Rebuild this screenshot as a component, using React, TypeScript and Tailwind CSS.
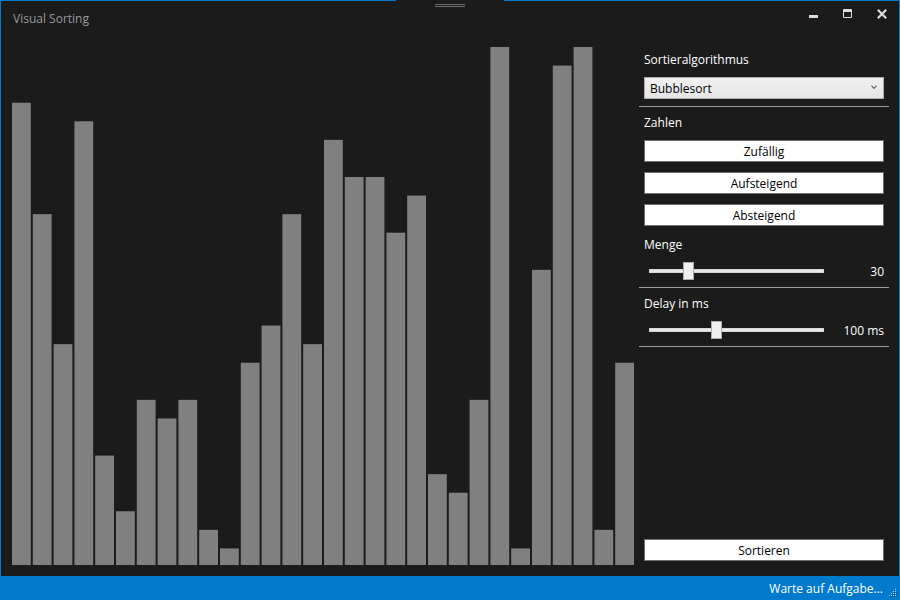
import { useState, type ReactNode } from "react";

const PITCH = 624 / 30;
const UNIT = 520 / 28;
const CHART_WIDTH = 622;
const CHART_HEIGHT = 518;

const numbers = [
  25, 19, 12, 24, 6, 3, 9, 8, 9, 2, 1, 11, 13, 19, 12, 23, 21, 21, 18, 20, 5, 4,
  9, 28, 1, 16, 27, 28, 2, 11,
];

function BarChart() {
  return (
    <svg
      className="min-w-0 flex-1 self-stretch"
      viewBox={`0 0 ${CHART_WIDTH} ${CHART_HEIGHT}`}
      preserveAspectRatio="none"
      role="img"
      aria-label="Zahlen"
    >
      {numbers.map((value, i) => {
        const height = value * UNIT - 2;
        return (
          <rect
            key={i}
            x={i * PITCH}
            y={CHART_HEIGHT - height}
            width={PITCH - 2}
            height={height}
            fill="#808080"
          />
        );
      })}
    </svg>
  );
}

function WindowButton({ label, children }: { label: string; children: ReactNode }) {
  return (
    <button
      type="button"
      aria-label={label}
      className="flex h-[26px] w-[34px] items-center justify-center text-[#dcdcdc]"
    >
      <svg width="10" height="10" viewBox="0 0 10 10" fill="none" stroke="currentColor">
        {children}
      </svg>
    </button>
  );
}

function PushButton({ children }: { children: ReactNode }) {
  return (
    <button
      type="button"
      className="mx-[5px] h-[22px] border border-[#707070] bg-white pt-0.5 text-center leading-[18px] text-black"
    >
      {children}
    </button>
  );
}

function Separator() {
  return <hr className="mt-[7px] mb-[3px] h-px border-0 bg-[#a0a0a0]" />;
}

type SliderProps = {
  id: string;
  label: string;
  min: number;
  max: number;
  initial: number;
  unit?: string;
};

function SliderField({ id, label, min, max, initial, unit = "" }: SliderProps) {
  const [value, setValue] = useState(initial);
  return (
    <>
      <label htmlFor={id} className="mb-1 px-[5px] leading-[26px]">
        {label}
      </label>
      <div className="flex h-[18px] items-center justify-between pr-[5px] pl-2.5">
        <input
          id={id}
          type="range"
          min={min}
          max={max}
          value={value}
          onChange={(e) => setValue(Number(e.target.value))}
          className="h-[18px] w-[175px] appearance-none bg-transparent [&::-webkit-slider-runnable-track]:h-1 [&::-webkit-slider-runnable-track]:border [&::-webkit-slider-runnable-track]:border-[#d6d6d6] [&::-webkit-slider-runnable-track]:bg-[#e7eaea] [&::-webkit-slider-thumb]:-mt-2 [&::-webkit-slider-thumb]:h-[18px] [&::-webkit-slider-thumb]:w-[11px] [&::-webkit-slider-thumb]:appearance-none [&::-webkit-slider-thumb]:border [&::-webkit-slider-thumb]:border-[#acacac] [&::-webkit-slider-thumb]:bg-[#f0f0f0]"
        />
        <output htmlFor={id} className="h-[18px] leading-5">
          {value}
          {unit}
        </output>
      </div>
    </>
  );
}

const gripDots = [
  [6, 0],
  [4, 2], [6, 2],
  [2, 4], [4, 4], [6, 4],
  [0, 6], [2, 6], [4, 6], [6, 6],
];

export default function App() {
  return (
    <div className="relative flex min-h-screen flex-col border-x border-t border-[#007acc] bg-[#1b1b1c] font-['Open_Sans','Noto_Sans',sans-serif] text-xs text-white">
      <div className="absolute -top-px left-1/2 flex h-2 w-[108px] -translate-x-1/2 flex-col items-center gap-px bg-[#1b1b1b] pt-1">
        <span className="h-px w-[30px] bg-[#6b6b6b]" />
        <span className="h-px w-[30px] bg-[#6b6b6b]" />
      </div>

      <header className="flex h-9 items-start justify-between pl-3">
        <h1 className="leading-9 text-[#999999]">Visual Sorting</h1>
        <div className="flex">
          <WindowButton label="Minimieren">
            <path d="M0 7.5h9" strokeWidth="3" />
          </WindowButton>
          <WindowButton label="Maximieren">
            <path d="M0.5 0.5h8v8h-8zM0 1.5h9M0 2.5h9" />
          </WindowButton>
          <WindowButton label="Schließen">
            <path d="M0.8 0.8l8.4 8.4M9.2 0.8l-8.4 8.4" strokeWidth="2.2" />
          </WindowButton>
        </div>
      </header>

      <main className="flex flex-1 gap-[5px] pt-2.5 pr-2.5 pb-[11px] pl-[11px]">
        <BarChart />

        <aside className="flex w-[250px] flex-col pb-1">
          <label htmlFor="algorithm" className="mb-1 px-[5px] leading-[26px]">
            Sortieralgorithmus
          </label>
          <div className="relative mx-[5px] flex">
            <select
              id="algorithm"
              className="h-[22px] w-full appearance-none border border-[#acacac] bg-linear-to-b from-[#f0f0f0] to-[#e5e5e5] px-[5px] pt-0.5 leading-[18px] text-black"
            >
              <option>Bubblesort</option>
            </select>
            <svg
              className="pointer-events-none absolute top-2 right-[7px]"
              width="6"
              height="5"
              viewBox="0 0 6 5"
              fill="none"
              stroke="#606060"
              strokeWidth="1.3"
            >
              <path d="M0.4 0.6L3 3.4L5.6 0.6" />
            </svg>
          </div>
          <Separator />

          <h2 className="mb-1 px-[5px] leading-[26px]">Zahlen</h2>
          <div className="mb-1.5 flex flex-col gap-2.5">
            <PushButton>Zufällig</PushButton>
            <PushButton>Aufsteigend</PushButton>
            <PushButton>Absteigend</PushButton>
          </div>
          <SliderField id="amount" label="Menge" min={5} max={127} initial={30} />
          <Separator />

          <SliderField id="delay" label="Delay in ms" min={10} max={248} initial={100} unit=" ms" />
          <Separator />

          <div className="mt-auto flex flex-col">
            <PushButton>Sortieren</PushButton>
          </div>
        </aside>
      </main>

      <footer className="flex h-6 items-center justify-end gap-1.5 bg-[#007acc] pr-0.5">
        <span role="status" className="pt-0.5">
          Warte auf Aufgabe...
        </span>
        <svg className="mb-[3px] self-end" width="8" height="8" viewBox="0 0 8 8">
          {gripDots.map(([x, y]) => (
            <g key={`${x}-${y}`}>
              <rect x={x + 1} y={y + 1} width="1" height="1" fill="#1b4f78" />
              <rect x={x} y={y} width="1" height="1" fill="#a5cfee" />
            </g>
          ))}
        </svg>
      </footer>
    </div>
  );
}
